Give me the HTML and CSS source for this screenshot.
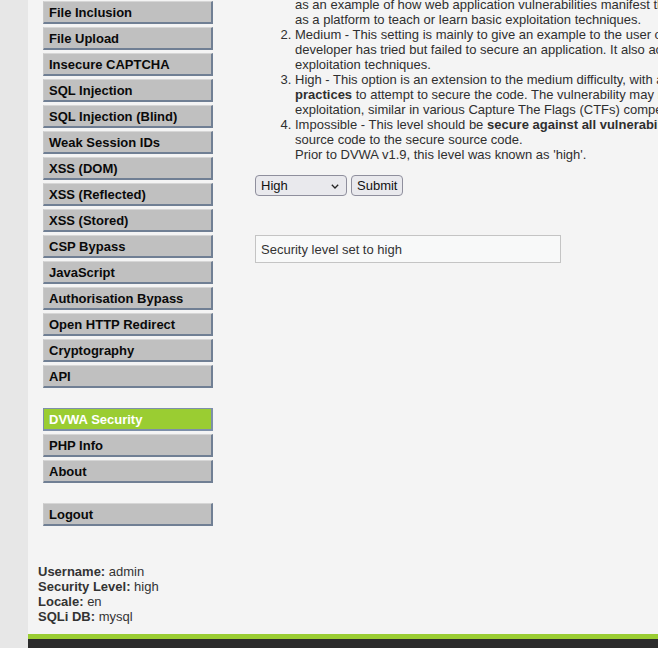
FILE: index.html
```html
<!DOCTYPE html>
<html lang="en">
<head>
<meta charset="utf-8">
<title>DVWA Security</title>
<link rel="stylesheet" href="styles.css">
</head>
<body>
<div class="container">
  <div class="layout">
    <div class="menu">
      <ul class="menu-block">
        <li><a href="#">Command Injection</a></li>
        <li><a href="#">File Inclusion</a></li>
        <li><a href="#">File Upload</a></li>
        <li><a href="#">Insecure CAPTCHA</a></li>
        <li><a href="#">SQL Injection</a></li>
        <li><a href="#">SQL Injection (Blind)</a></li>
        <li><a href="#">Weak Session IDs</a></li>
        <li><a href="#">XSS (DOM)</a></li>
        <li><a href="#">XSS (Reflected)</a></li>
        <li><a href="#">XSS (Stored)</a></li>
        <li><a href="#">CSP Bypass</a></li>
        <li><a href="#">JavaScript</a></li>
        <li><a href="#">Authorisation Bypass</a></li>
        <li><a href="#">Open HTTP Redirect</a></li>
        <li><a href="#">Cryptography</a></li>
        <li><a href="#">API</a></li>
      </ul>
      <ul class="menu-block">
        <li class="selected"><a href="#">DVWA Security</a></li>
        <li><a href="#">PHP Info</a></li>
        <li><a href="#">About</a></li>
      </ul>
      <ul class="menu-block">
        <li><a href="#">Logout</a></li>
      </ul>
    </div>
    <div class="main">
      <ol class="levels">
        <li>Low - This security level is completely vulnerable and <strong>has no security measures at all</strong>. It's use is to be<br>as an example of how web application vulnerabilities manifest through bad coding practices and to serve<br>as a platform to teach or learn basic exploitation techniques.</li>
        <li>Medium - This setting is mainly to give an example to the user of <strong>bad security practices</strong>, where the<br>developer has tried but failed to secure an application. It also acts as a challenge to users to refine their<br>exploitation techniques.</li>
        <li>High - This option is an extension to the medium difficulty, with a mixture of <strong>harder or alternative bad</strong><br><strong>practices</strong> to attempt to secure the code. The vulnerability may not allow the same extent of the<br>exploitation, similar in various Capture The Flags (CTFs) competitions.</li>
        <li>Impossible - This level should be <strong>secure against all vulnerabilities</strong>. It is used to compare the vulnerable<br>source code to the secure source code.<br>Prior to DVWA v1.9, this level was known as 'high'.</li>
      </ol>
      <form class="level-form" action="#" method="post">
        <span class="select-wrap">
          <select class="level-select" name="security">
            <option value="low">Low</option>
            <option value="medium">Medium</option>
            <option value="high" selected>High</option>
            <option value="impossible">Impossible</option>
          </select>
          <svg class="chevron" width="8" height="5" viewBox="0 0 8 5" aria-hidden="true"><path d="M0.8 0.8 L4 4 L7.2 0.8" fill="none" stroke="#222" stroke-width="1.3"/></svg>
        </span>
        <input class="submit-btn" type="submit" value="Submit" name="seclev_submit">
      </form>
      <div class="message">Security level set to high</div>
    </div>
  </div>
  <div class="info">
    <div><strong>Username:</strong> admin</div>
    <div><strong>Security Level:</strong> high</div>
    <div><strong>Locale:</strong> en</div>
    <div><strong>SQLi DB:</strong> mysql</div>
  </div>
  <div class="footer"></div>
</div>
</body>
</html>
```

FILE: styles.css
```css
html, body {
  margin: 0;
  padding: 0;
  overflow: hidden;
}

body {
  background: #e7e7e7;
  color: #2f2f2f;
  font-family: "Liberation Sans", Arial, Helvetica, sans-serif;
  font-size: 13px;
}

.container {
  width: 900px;
  margin: -25px 0 0 28px;
  background: #f4f4f4;
}

.layout {
  display: flex;
  align-items: flex-start;
}

.menu {
  width: 170px;
  padding-left: 15px;
  flex: none;
}

.menu-block {
  list-style: none;
  margin: 0 0 20px 0;
  padding: 0;
}

.menu-block li {
  margin: 0 0 3px 0;
}

.menu-block li a {
  display: block;
  padding: 3px 5px 2px 5px;
  background: #c0c0c0;
  color: #0a0a0a;
  font-weight: bold;
  text-decoration: none;
  border-style: solid;
  border-width: 1px 2px 2px 1px;
  border-color: #d6d6d6 #707f94 #707f94 #c8c8c8;
}

.menu-block li.selected a {
  background: #9acd32;
  color: #fff;
  border-color: #7d8fa9;
}

.main {
  margin-left: 42px;
  padding-top: 7px;
  flex: 1;
  min-width: 0;
}

.levels {
  margin: 0 0 13px 0;
  padding-left: 40px;
  white-space: nowrap;
}

.level-form {
  display: flex;
  align-items: center;
  gap: 4px;
  margin: 0;
}

.select-wrap {
  position: relative;
  display: block;
  width: 92px;
  height: 21px;
}

.chevron {
  position: absolute;
  right: 8px;
  top: 9px;
  pointer-events: none;
}

.level-select,
.submit-btn {
  font-family: "Liberation Sans", Arial, Helvetica, sans-serif;
  font-size: 13px;
  color: #111;
  height: 21px;
  box-sizing: border-box;
  background-color: #e9e9ed;
  border: 1px solid #8f8f9d;
  border-radius: 4px;
  margin: 0;
}

.level-select {
  appearance: none;
  -webkit-appearance: none;
  width: 92px;
  padding: 0 0 0 5px;
}

.submit-btn {
  padding: 0 5px;
}

.message {
  width: 294px;
  margin-top: 39px;
  padding: 6px 5px 5px 5px;
  background: #f8f9f9;
  border: 1px solid #c4c4c4;
  color: #333;
}

.info {
  margin-top: 18px;
  padding-left: 10px;
  color: #333;
}

.footer {
  margin-top: 10px;
  height: 20px;
  background: #2b2b2b;
  border-top: 5px solid #9acd32;
}
```
